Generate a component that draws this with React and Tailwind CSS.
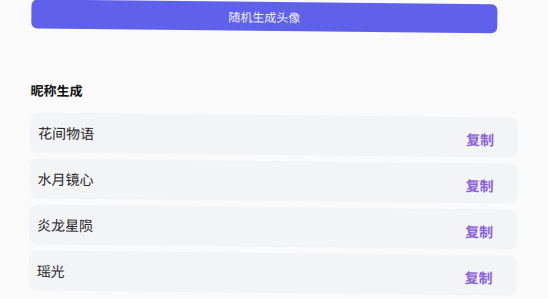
const names = ["花间物语", "水月镜心", "炎龙星陨", "瑶光"];

function NameRow({ name }) {
  return (
    <div className="flex h-[40px] items-center justify-between rounded-lg bg-[#f3f4f6] pl-2 pr-[24px]">
      <span className="text-[14px] text-[#27272a]">{name}</span>
      <button className="pt-[4px] text-[14px] font-semibold text-[#8b63d9]">复制</button>
    </div>
  );
}

export default function App() {
  return (
    <div
      className="min-h-[299px] w-full overflow-hidden bg-[#fafafb]"
      style={{ fontFamily: '"Noto Sans CJK SC", "Noto Sans", sans-serif' }}
    >
      <div className="rotate-[0.6deg] px-[30px] pt-[2px]">
        <button className="flex h-[29px] w-[466px] items-center justify-center rounded-md bg-[#5f61ea] text-[12px] text-[#eef0ff]">
          随机生成头像
        </button>

        <h3 className="mt-[53px] text-[13px] font-bold leading-[18px] text-[#111]">昵称生成</h3>

        <div className="mt-[13px] flex flex-col gap-[6px]">
          {names.map((n) => (
            <NameRow key={n} name={n} />
          ))}
        </div>
      </div>
    </div>
  );
}
